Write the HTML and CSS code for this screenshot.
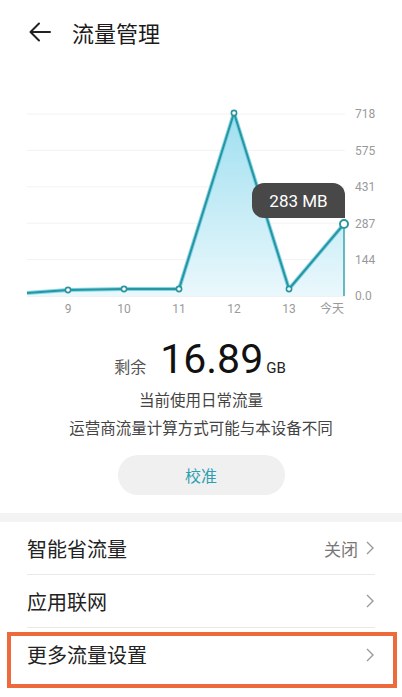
FILE: index.html
```html
<!DOCTYPE html>
<html lang="zh-CN">
<head>
    <meta charset="UTF-8">
    <meta name="viewport" content="width=device-width, initial-scale=1.0">
    <title>流量管理</title>
    <link rel="stylesheet" href="styles.css">
</head>
<body>
    <div id="screen">
        <div class="top-bar">
            <svg class="back-icon" width="22" height="20" viewBox="0 0 22 20">
                <path d="M21 10H2M10 1.5L1.5 10L10 18.5" fill="none" stroke="#222" stroke-width="2" stroke-linecap="round" stroke-linejoin="round"/>
            </svg>
            <h1 class="page-title">流量管理</h1>
        </div>

        <div class="chart">
            <svg width="402" height="262" viewBox="0 64 402 262">
                <defs>
                    <linearGradient id="area-fill" x1="0" y1="0" x2="0" y2="1">
                        <stop offset="0" stop-color="#9fdff0"/>
                        <stop offset="1" stop-color="#eaf8fc"/>
                    </linearGradient>
                </defs>
                <g stroke="#f2f2f2" stroke-width="1">
                    <line x1="27" y1="114" x2="345" y2="114"/>
                    <line x1="27" y1="150.4" x2="345" y2="150.4"/>
                    <line x1="27" y1="186.8" x2="345" y2="186.8"/>
                    <line x1="27" y1="223.2" x2="345" y2="223.2"/>
                    <line x1="27" y1="259.6" x2="345" y2="259.6"/>
                </g>
                <line x1="27" y1="296" x2="345" y2="296" stroke="#e4e4e4" stroke-width="1"/>
                <path d="M27,293 L68,290 L124,289 L179,289 L234,113 L289,289 L344,224 L344,296 L27,296 Z" fill="url(#area-fill)"/>
                <path d="M27,293 L68,290 L124,289 L179,289 L234,113 L289,289 L344,224" fill="none" stroke="#7fd6e8" stroke-width="4" stroke-linejoin="round"/>
                <path d="M27,293 L68,290 L124,289 L179,289 L234,113 L289,289 L344,224" fill="none" stroke="#2a949f" stroke-width="2" stroke-linejoin="round"/>
                <line x1="344" y1="224" x2="344" y2="296" stroke="#3aa3ad" stroke-width="1.5"/>
                <g fill="#fff" stroke="#2a949f" stroke-width="1.6">
                    <circle cx="68" cy="290" r="2.6"/>
                    <circle cx="124" cy="289" r="2.6"/>
                    <circle cx="179" cy="289" r="2.6"/>
                    <circle cx="234" cy="113" r="2.6"/>
                    <circle cx="289" cy="289" r="2.6"/>
                </g>
                <circle cx="344" cy="224" r="4" fill="#fff" stroke="#2a949f" stroke-width="2"/>
                <g class="axis-y">
                    <text x="355" y="118">718</text>
                    <text x="355" y="155">575</text>
                    <text x="355" y="191">431</text>
                    <text x="355" y="228">287</text>
                    <text x="355" y="264">144</text>
                    <text x="355" y="300">0.0</text>
                </g>
                <g class="axis-x">
                    <text x="68" y="313">9</text>
                    <text x="124" y="313">10</text>
                    <text x="179" y="313">11</text>
                    <text x="234" y="313">12</text>
                    <text x="289" y="313">13</text>
                    <text x="332" y="313">今天</text>
                </g>
            </svg>
            <div class="tooltip">283 MB</div>
        </div>

        <div class="summary">
            <div class="remain">
                <span class="remain-label">剩余</span>
                <span class="remain-value">16.89</span>
                <span class="remain-unit">GB</span>
            </div>
            <p class="summary-line">当前使用日常流量</p>
            <p class="summary-line">运营商流量计算方式可能与本设备不同</p>
            <button class="calibrate">校准</button>
        </div>

        <div class="band"></div>

        <div class="settings">
            <div class="setting-row">
                <span class="setting-name">智能省流量</span>
                <span class="setting-value">关闭</span>
                <svg class="chevron" width="8" height="14" viewBox="0 0 8 14"><path d="M1 1l6 6-6 6" fill="none" stroke="#9a9a9a" stroke-width="1.4"/></svg>
            </div>
            <div class="setting-row">
                <span class="setting-name">应用联网</span>
                <svg class="chevron" width="8" height="14" viewBox="0 0 8 14"><path d="M1 1l6 6-6 6" fill="none" stroke="#9a9a9a" stroke-width="1.4"/></svg>
            </div>
            <div class="setting-row last">
                <span class="setting-name">更多流量设置</span>
                <svg class="chevron" width="8" height="14" viewBox="0 0 8 14"><path d="M1 1l6 6-6 6" fill="none" stroke="#9a9a9a" stroke-width="1.4"/></svg>
                <div class="highlight"></div>
            </div>
        </div>
    </div>
</body>
</html>
```

FILE: styles.css
```css
/* Reset */
* {
    margin: 0;
    padding: 0;
    box-sizing: border-box;
}

body {
    font-family: Roboto, "Noto Sans CJK SC", sans-serif;
    background-color: #ffffff;
    color: #222;
}

#screen {
    width: 402px;
    height: 697px;
    overflow: hidden;
    background: #fff;
}

/* Header */
.top-bar {
    height: 64px;
    display: flex;
    align-items: center;
    padding-left: 29px;
}

.back-icon {
    margin-right: 21px;
}

.page-title {
    font-size: 22px;
    font-weight: 400;
    color: #1a1a1a;
}

/* Chart */
.chart {
    position: relative;
    height: 262px;
}

.chart svg {
    display: block;
}

.axis-y text {
    font-size: 12px;
    fill: #9a9a9a;
}

.axis-x text {
    font-size: 12px;
    fill: #9a9a9a;
    text-anchor: middle;
}

.tooltip {
    position: absolute;
    left: 252px;
    top: 119px;
    width: 93px;
    height: 35px;
    background: #484848;
    color: #fff;
    border-radius: 12px 12px 0 12px;
    font-size: 17px;
    display: flex;
    align-items: center;
    justify-content: center;
}

/* Remaining data */
.summary {
    display: flex;
    flex-direction: column;
    align-items: center;
    padding-top: 9px;
}

.remain {
    display: flex;
    align-items: baseline;
    height: 52px;
    margin-left: -2px;
}

.remain-label {
    font-size: 16px;
    color: #555;
    margin-right: 14px;
}

.remain-value {
    font-size: 41px;
    color: #111;
    line-height: 48px;
}

.remain-unit {
    font-size: 15px;
    color: #222;
    margin-left: 3px;
}

.summary-line {
    font-size: 15.5px;
    color: #444;
    line-height: 28px;
}

.calibrate {
    margin-top: 12px;
    width: 167px;
    height: 40px;
    border: none;
    border-radius: 20px;
    background: #f0f0f0;
    color: #2e9fb3;
    font-family: "Noto Sans CJK SC", sans-serif;
    font-size: 16px;
}

.band {
    margin-top: 18px;
    height: 9px;
    background: #f3f3f3;
}

/* Settings list */
.settings {
    padding: 0 27px;
}

.setting-row {
    position: relative;
    display: flex;
    align-items: center;
    height: 53px;
    border-bottom: 1px solid #e9e9e9;
}

.setting-row.last {
    border-bottom: none;
}

.setting-name {
    flex: 1;
    font-size: 20px;
    color: #222;
}

.setting-value {
    font-size: 17px;
    color: #777;
    margin-right: 8px;
}

.chevron {
    margin-right: 1px;
}

.highlight {
    position: absolute;
    left: -20px;
    right: -22px;
    top: 4px;
    height: 56px;
    border: 4px solid #ec6a3c;
}
```
